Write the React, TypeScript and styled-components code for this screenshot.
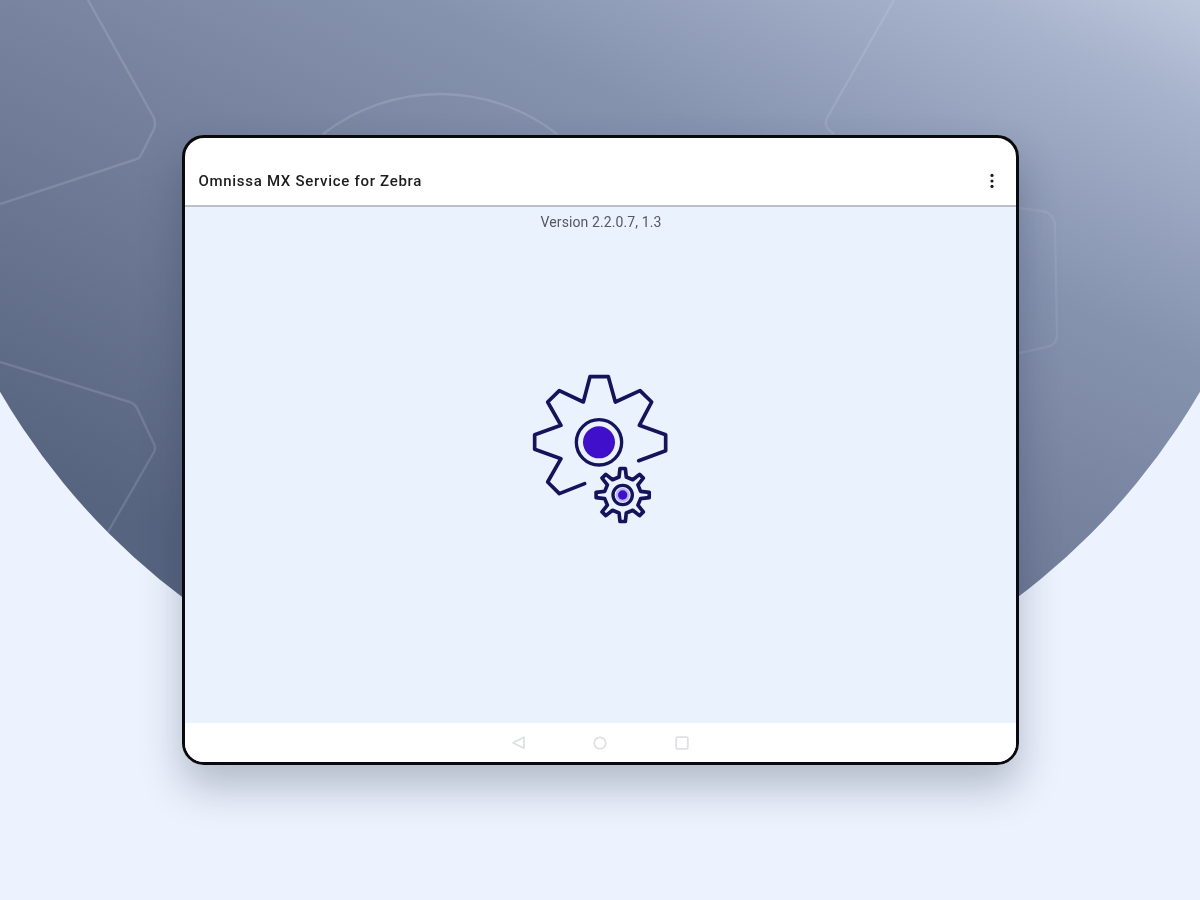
import React from "react";
import styled, { createGlobalStyle } from "styled-components";

const GlobalStyle = createGlobalStyle`
  html, body {
    margin: 0;
    padding: 0;
    background: #ecf3fe;
  }
`;

const NAVY = "#14135c";
const VIOLET = "#3f0fcc";

// eight-toothed outline for the small gear, in the main gear's units
const buildSmallGear = (cx: number, cy: number) => {
  const points: string[] = [];
  for (let i = 0; i < 8; i++) {
    const mid = (i * Math.PI) / 4 - Math.PI / 2;
    const corners: [number, number][] = [
      [-0.2, 55],
      [-0.1, 80],
      [0.1, 80],
      [0.2, 55],
    ];
    corners.forEach(([offset, radius]) => {
      const x = cx + radius * Math.cos(mid + offset);
      const y = cy + radius * Math.sin(mid + offset);
      points.push(`${x.toFixed(1)} ${y.toFixed(1)}`);
    });
  }
  return `M${points.join("L")}Z`;
};

const GearIcon = () => (
  <GearSvg width="200" height="190" viewBox="0 0 600 570" fill="none">
    <g stroke={NAVY} strokeLinejoin="round" strokeLinecap="round">
      <path
        strokeWidth="11"
        d="M416 332L497 302V254L418 226L455 156L420 122L346 156L325 80H270L250 156L178 122L143 156L183 226L104 254V298L183 326L143 396L178 431L254 401"
      />
      <circle cx="297" cy="277" r="68" strokeWidth="10" />
      <path strokeWidth="11" d={buildSmallGear(368, 435)} />
      <circle cx="368" cy="435" r="29" strokeWidth="10" />
    </g>
    <circle cx="297" cy="277" r="48" fill={VIOLET} />
    <circle cx="368" cy="435" r="21" fill="#b9b6f0" />
    <circle cx="368" cy="435" r="14" fill={VIOLET} />
  </GearSvg>
);

const App = () => (
  <Stage>
    <GlobalStyle />
    <Backdrop>
      <Disc />
      <DecoLines width="1200" height="900" viewBox="0 0 1200 900" fill="none">
        <path d="M88 0L154 118Q156 124 154 129L141 155Q139 159 134 160L0 204" />
        <path d="M0 362L130 402Q135 404 137 408L154 444Q156 448 154 452L108 532" />
        <path d="M323 134A191 191 0 0 1 557 134" />
        <path strokeOpacity="0.8" d="M894 0L827 118Q824 124 828 129L834 134" />
        <path strokeOpacity="0.6" d="M1019 208L1042 211Q1054 213 1055 225L1057 335Q1057 345 1047 347L1019 353" />
      </DecoLines>
    </Backdrop>

    <Tablet>
      <AppBar>
        <AppTitle>Omnissa MX Service for Zebra</AppTitle>
        <svg width="6" height="16" viewBox="0 0 6 16" fill="#1c1c1c">
          <circle cx="3" cy="2.4" r="1.6" />
          <circle cx="3" cy="8" r="1.6" />
          <circle cx="3" cy="13.4" r="1.6" />
        </svg>
      </AppBar>
      <Content>
        <Version>Version 2.2.0.7, 1.3</Version>
        <GearIcon />
      </Content>
      <NavBar>
        <svg width="16" height="16" viewBox="0 0 16 16" fill="none" stroke="#dfe0e3" strokeWidth="1.8" strokeLinejoin="round">
          <path d="M14 2.2V13.2L3 7.8Z" />
        </svg>
        <svg width="16" height="16" viewBox="0 0 16 16" fill="none" stroke="#dfe0e3" strokeWidth="1.8">
          <circle cx="8" cy="8" r="5.7" />
        </svg>
        <svg width="16" height="16" viewBox="0 0 16 16" fill="none" stroke="#dfe0e3" strokeWidth="1.8" strokeLinejoin="round">
          <rect x="2.2" y="2.2" width="11.6" height="11.6" rx="1" />
        </svg>
      </NavBar>
    </Tablet>
  </Stage>
);

export default App;

const Stage = styled.div`
  position: relative;
  width: 1200px;
  height: 900px;
  overflow: hidden;
  background: #ecf3fe;
  display: flex;
  justify-content: center;
  padding-top: 135px;
  box-sizing: border-box;
`;

const Backdrop = styled.div`
  position: absolute;
  inset: 0;
`;

const Disc = styled.div`
  position: absolute;
  left: -94px;
  top: -651px;
  width: 1388px;
  height: 1388px;
  border-radius: 50%;
  background: linear-gradient(
    205deg,
    #c2ccdf 33%,
    #a7b3cc 39.5%,
    #8693af 52%,
    #78849f 62%,
    #576480 84%
  );
`;

const DecoLines = styled.svg`
  position: absolute;
  inset: 0;
  filter: blur(0.6px);

  path {
    stroke: #ffffff;
    stroke-width: 2.4;
    opacity: 0.13;
  }
`;

const Tablet = styled.div`
  position: relative;
  width: 837px;
  height: 630px;
  box-sizing: border-box;
  border: 3px solid #0a0a0c;
  border-radius: 22px;
  background: #ffffff;
  overflow: hidden;
  display: flex;
  flex-direction: column;
  box-shadow: 0 22px 42px rgba(30, 40, 60, 0.28);
`;

const AppBar = styled.header`
  height: 69px;
  box-sizing: border-box;
  border-bottom: 2px solid #bcc0cb;
  padding: 18px 21px 0 14px;
  display: flex;
  align-items: center;
  justify-content: space-between;
  flex-shrink: 0;
`;

const AppTitle = styled.h1`
  margin: 0;
  font-family: Roboto, "Liberation Sans", sans-serif;
  font-size: 15px;
  font-weight: 500;
  letter-spacing: 0.7px;
  color: #1d1d1f;
  filter: blur(0.4px);
`;

const Content = styled.main`
  flex: 1;
  background: #eaf2fe;
  display: flex;
  flex-direction: column;
  align-items: center;
`;

const Version = styled.div`
  margin-top: 6px;
  margin-left: 2px;
  height: 20px;
  line-height: 18px;
  font-family: Roboto, "Liberation Sans", sans-serif;
  font-size: 14px;
  letter-spacing: 0.1px;
  color: #55585e;
  filter: blur(0.4px);
`;

const GearSvg = styled.svg`
  margin-top: 117px;
  filter: blur(0.5px);
`;

const NavBar = styled.nav`
  height: 39px;
  flex-shrink: 0;
  background: #ffffff;
  display: flex;
  align-items: center;
  justify-content: center;
  gap: 66px;
`;
